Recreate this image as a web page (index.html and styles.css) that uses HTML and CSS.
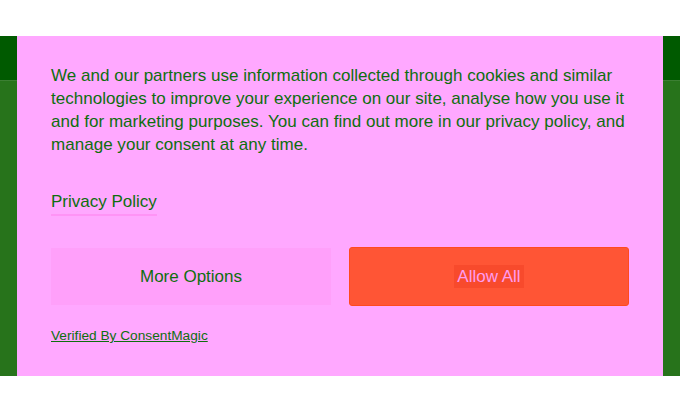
FILE: index.html
```html
<!DOCTYPE html>
<html lang="en">
    <head>
        <meta charset="UTF-8" />
        <title>Consent</title>
        <link rel="stylesheet" href="styles.css">
    </head>
    <body>
        <div class="top_space"></div>
        <div class="site_bg">
            <div class="site_head"></div>
            <div class="site_body"></div>

            <!-- cookie popup -->
            <div class="cs_modal">
                <p class="cs_text">
                    We and our partners use information collected through cookies and similar<br />
                    technologies to improve your experience on our site, analyse how you use it<br />
                    and for marketing purposes. You can find out more in our privacy policy, and<br />
                    manage your consent at any time.
                </p>
                <a class="cs_policy" href="#">Privacy Policy</a>
                <div class="cs_btns">
                    <button class="btn_more" type="button">More Options</button>
                    <button class="btn_allow" type="button"><span>Allow All</span></button>
                </div>
                <a class="cs_verified" href="#">Verified By ConsentMagic</a>
            </div>
        </div>
    </body>
</html>
```

FILE: styles.css
```css
* {
    margin: 0px;
    padding: 0px;
    box-sizing: border-box;
}

body {
    width: 680px;
    height: 411px;
    background-color: #fff;
    font-family: "Liberation Sans", Arial, sans-serif;
    overflow: hidden;
}

.top_space {
    height: 36px;
}

.site_bg {
    position: relative;
    height: 340px;
    background-color: #27731b;
}

.site_head {
    height: 45px;
    background-color: #005a00;
    border-bottom: 1px solid #3c7f33;
}

.site_body {
    height: 295px;
    background-color: #27731b;
}

/* 쿠키 팝업 */
.cs_modal {
    position: absolute;
    left: 17px;
    top: 0px;
    width: 646px;
    height: 340px;
    background-color: #ffa8ff;
    padding: 28px 20px 0px 34px;
    color: #0e6e0e;
}

.cs_text {
    font-size: 17px;
    line-height: 23px;
    letter-spacing: 0.03px;
    white-space: nowrap;
}

.cs_policy {
    display: inline-block;
    margin-top: 34px;
    font-size: 17px;
    line-height: 23px;
    color: #0e6e0e;
    text-decoration: none;
    border-bottom: 2px solid #ff94f6;
    padding-bottom: 1px;
}

.cs_btns {
    display: flex;
    gap: 18px;
    margin-top: 32px;
}

.btn_more {
    width: 280px;
    height: 57px;
    font-family: "Liberation Sans", Arial, sans-serif;
    font-size: 17px;
    color: #0e6e0e;
    background-color: #ffa0fa;
    border: none;
}

.btn_allow {
    width: 280px;
    height: 59px;
    margin-top: -1px;
    font-family: "Liberation Sans", Arial, sans-serif;
    font-size: 17px;
    color: #ff9cf0;
    background-color: #ff5535;
    border: 1px solid #ff4a1e;
    border-radius: 3px;
}

.btn_allow span {
    background-color: #f84a2c;
    padding: 2px 3px;
}

.cs_verified {
    display: inline-block;
    margin-top: 22px;
    font-size: 13.7px;
    color: #0e6e0e;
    text-decoration: underline;
}
```
